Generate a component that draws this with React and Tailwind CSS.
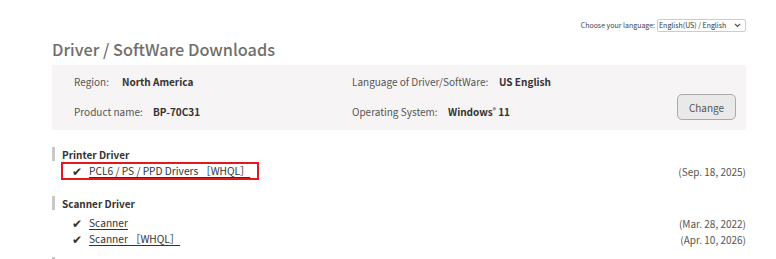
const FONT = "font-['Noto_Sans_CJK_JP','Noto_Sans',sans-serif]";

function Heading({ title, className = '' }) {
  return (
    <div className={`flex items-center h-[14px] ${className}`}>
      <div className="w-[3px] h-[14px] bg-[#c8c8c8]" />
      {title && <span className="ml-[7px] text-[10px] font-bold text-[#333]">{title}</span>}
    </div>
  );
}

function Item({ name, date, highlight, className = '' }) {
  return (
    <div className={`flex items-center justify-between h-[16px] ${className}`}>
      <div
        className={`flex items-center h-[16px] ml-[10px] pl-[10px] pr-[8px] ${
          highlight ? 'outline-2 outline-[#e5161e] outline-offset-[-1px]' : ''
        }`}
      >
        <span className="text-[12px] leading-none text-[#333] w-[17px]">✔</span>
        <a href="#" className="text-[10.2px] text-[#333] underline underline-offset-2 whitespace-nowrap">{name}</a>
      </div>
      <span className="text-[10px] text-[#555]">{date}</span>
    </div>
  );
}

export default function App() {
  return (
    <div className={`w-[776px] h-[259px] overflow-hidden bg-white ${FONT}`}>
      <div className="ml-[52px] w-[694px]">
        <div className="flex justify-end items-center h-[13px] pt-[19px] box-content text-[7px] text-[#444] whitespace-nowrap">
          <span className="mr-[2px]">Choose your language:</span>
          <div className="flex items-center justify-between w-[89px] h-[13px] border border-[#ccc] rounded-[2px] pl-[1px] pr-[4px]">
            <span className="text-[#333]">English(US) / English</span>
            <svg width="7" height="5" viewBox="0 0 7 5" fill="none" stroke="#555" strokeWidth="1.2">
              <path d="M1 1l2.5 2.5L6 1" />
            </svg>
          </div>
        </div>

        <h1 className="mt-[3px] h-[28px] flex items-center text-[16.3px] font-medium text-[#6e6e6e] leading-none">
          Driver / SoftWare Downloads
        </h1>

        <div className="mt-[2px] h-[65px] bg-[#f6f4f4] flex text-[10px]">
          <div className="w-[300px] pl-[22px] pt-[8px] flex flex-col">
            <div className="flex items-center h-[16px]">
              <span className="text-[#555] w-[48px]">Region:</span>
              <span className="font-bold text-[#333]">North America</span>
            </div>
            <div className="flex items-center h-[16px] mt-[14px]">
              <span className="text-[#555] w-[79px]">Product name:</span>
              <span className="font-bold text-[#333]">BP-70C31</span>
            </div>
          </div>
          <div className="flex-1 pt-[8px] flex flex-col">
            <div className="flex items-center h-[16px]">
              <span className="text-[#555] w-[147px]">Language of Driver/SoftWare:</span>
              <span className="font-bold text-[#333]">US English</span>
            </div>
            <div className="flex items-center h-[16px] mt-[14px]">
              <span className="text-[#555] w-[96px]">Operating System:</span>
              <span className="font-bold text-[#333]">
                Windows<span className="text-[6px] relative -top-[3px]">®</span> 11
              </span>
            </div>
          </div>
          <div className="pr-[10px] pt-[29px]">
            <button className="w-[59px] h-[26px] rounded-[5px] border border-[#aaa] bg-[#e9e9e9] text-[10px] text-[#555]">
              Change
            </button>
          </div>
        </div>

        <Heading title="Printer Driver" className="mt-[17px]" />
        <Item className="mt-[2px]" name="PCL6 / PS / PPD Drivers ［WHQL］" date="(Sep. 18, 2025)" highlight />

        <Heading title="Scanner Driver" className="mt-[17px]" />
        <Item className="mt-[5px]" name="Scanner" date="(Mar. 28, 2022)" />
        <Item name="Scanner ［WHQL］" date="(Apr. 10, 2026)" />

        <Heading className="mt-[10px]" />
      </div>
    </div>
  );
}
